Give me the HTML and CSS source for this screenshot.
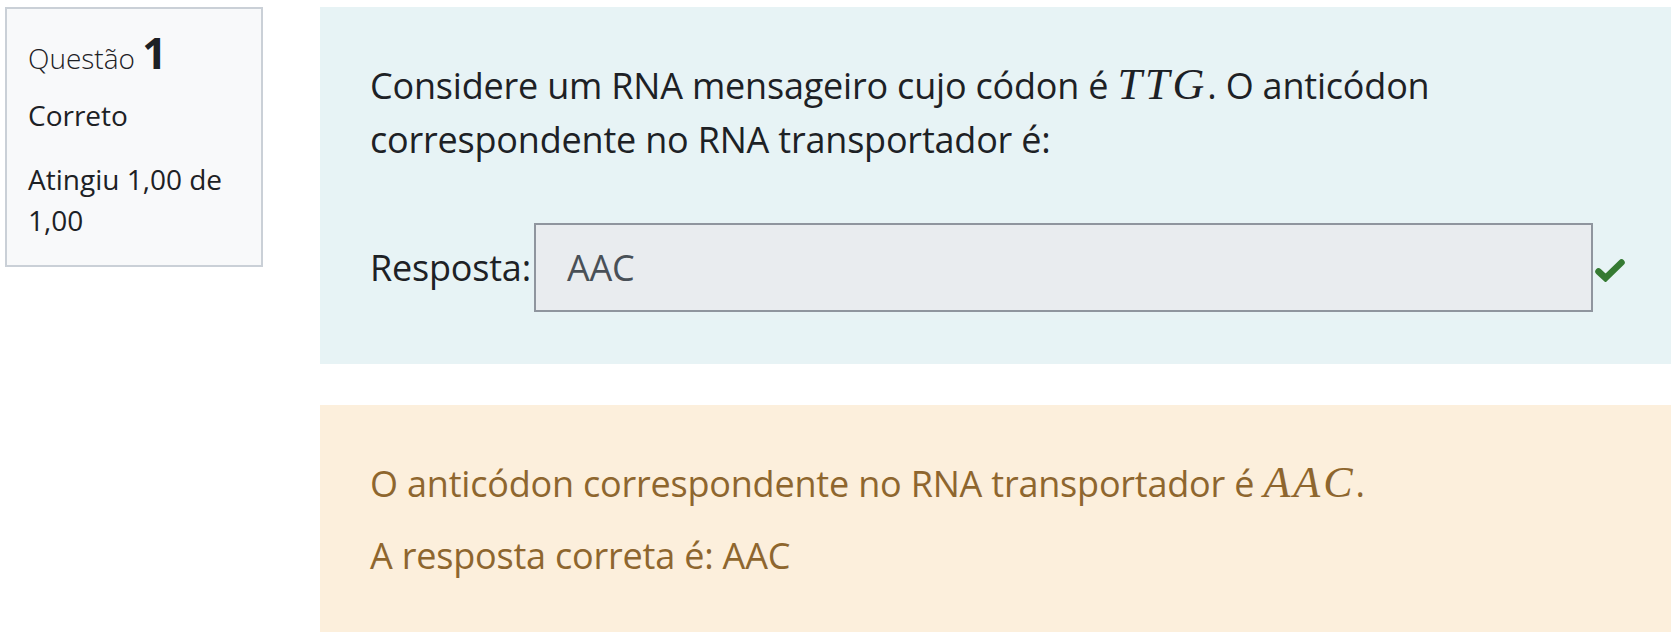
FILE: index.html
```html
<!DOCTYPE html>
<html lang="pt">
<head>
<meta charset="utf-8">
<title>Questão 1</title>
<link rel="stylesheet" href="styles.css">
</head>
<body>
<div class="que">
  <div class="info">
    <h3 class="no">Questão <span class="qno">1</span></h3>
    <div class="state">Correto</div>
    <div class="grade">Atingiu 1,00 de 1,00</div>
  </div>
  <div class="content">
    <div class="formulation">
      <p class="qtext">Considere um RNA mensageiro cujo códon é <span class="math">TTG</span>. O anticódon correspondente no RNA transportador é:</p>
      <div class="ablock">
        <label class="prompt">Resposta:</label>
        <div class="answer">AAC</div>
        <svg class="check" width="30" height="23" viewBox="0 0 30 23"><polyline points="3.5,12.5 10.5,19 26.5,3.5" fill="none" stroke="#357a32" stroke-width="6.5" stroke-linecap="round" stroke-linejoin="miter"/></svg>
      </div>
    </div>
    <div class="outcome">
      <p class="fb">O anticódon correspondente no RNA transportador é <span class="math">AAC</span>.</p>
      <p class="fb right">A resposta correta é: AAC</p>
    </div>
  </div>
</div>
</body>
</html>
```
FILE: styles.css
```css
html, body {
  margin: 0;
  padding: 0;
  background: #ffffff;
}
body {
  font-family: "Open Sans", "Noto Sans", sans-serif;
  color: #1d2125;
  overflow: hidden;
  height: 632px;
}
.que {
  display: flex;
  align-items: flex-start;
  padding-top: 7px;
}
.info {
  flex: 0 0 258px;
  box-sizing: border-box;
  width: 258px;
  height: 260px;
  margin-left: 5px;
  padding: 20px 0 0 21px;
  background: #f8f9fa;
  border: 2px solid #cad0d7;
  font-size: 28px;
}
.no {
  margin: 0;
  font-size: 28px;
  font-weight: 300;
  line-height: 48px;
}
.qno {
  font-size: 43px;
  font-weight: 700;
}
.state {
  margin-top: 13px;
  line-height: 40px;
}
.grade {
  margin-top: 24px;
  line-height: 41px;
}
.content {
  flex: 1 1 auto;
  min-width: 0;
  margin-left: 57px;
}
.formulation {
  background: #e7f3f5;
  padding: 51px 50px 52px 50px;
  font-size: 36px;
  line-height: 54px;
  letter-spacing: -0.2px;
}
.qtext {
  margin: 0 0 56px 0;
  width: 1080px;
}
.math {
  font-family: "Liberation Serif", "Times New Roman", serif;
  font-style: italic;
  font-size: 44px;
  letter-spacing: 3px;
}
.ablock {
  display: flex;
  align-items: center;
}
.prompt {
  margin-right: 3px;
  flex: none;
}
.answer {
  flex: none;
  box-sizing: border-box;
  width: 1059px;
  height: 89px;
  padding-left: 31px;
  background: #e9ecef;
  border: 2px solid #8f959e;
  color: #495057;
  display: flex;
  align-items: center;
}
.check {
  flex: none;
  margin-left: 2px;
  margin-top: 6px;
}
.outcome {
  margin-top: 41px;
  background: #fcefdc;
  color: #8e662e;
  padding: 51px 50px 60px 50px;
  font-size: 36px;
  line-height: 54px;
  letter-spacing: -0.2px;
  height: 300px;
}
.fb {
  margin: 0;
}
.fb.right {
  margin-top: 18px;
}
```
